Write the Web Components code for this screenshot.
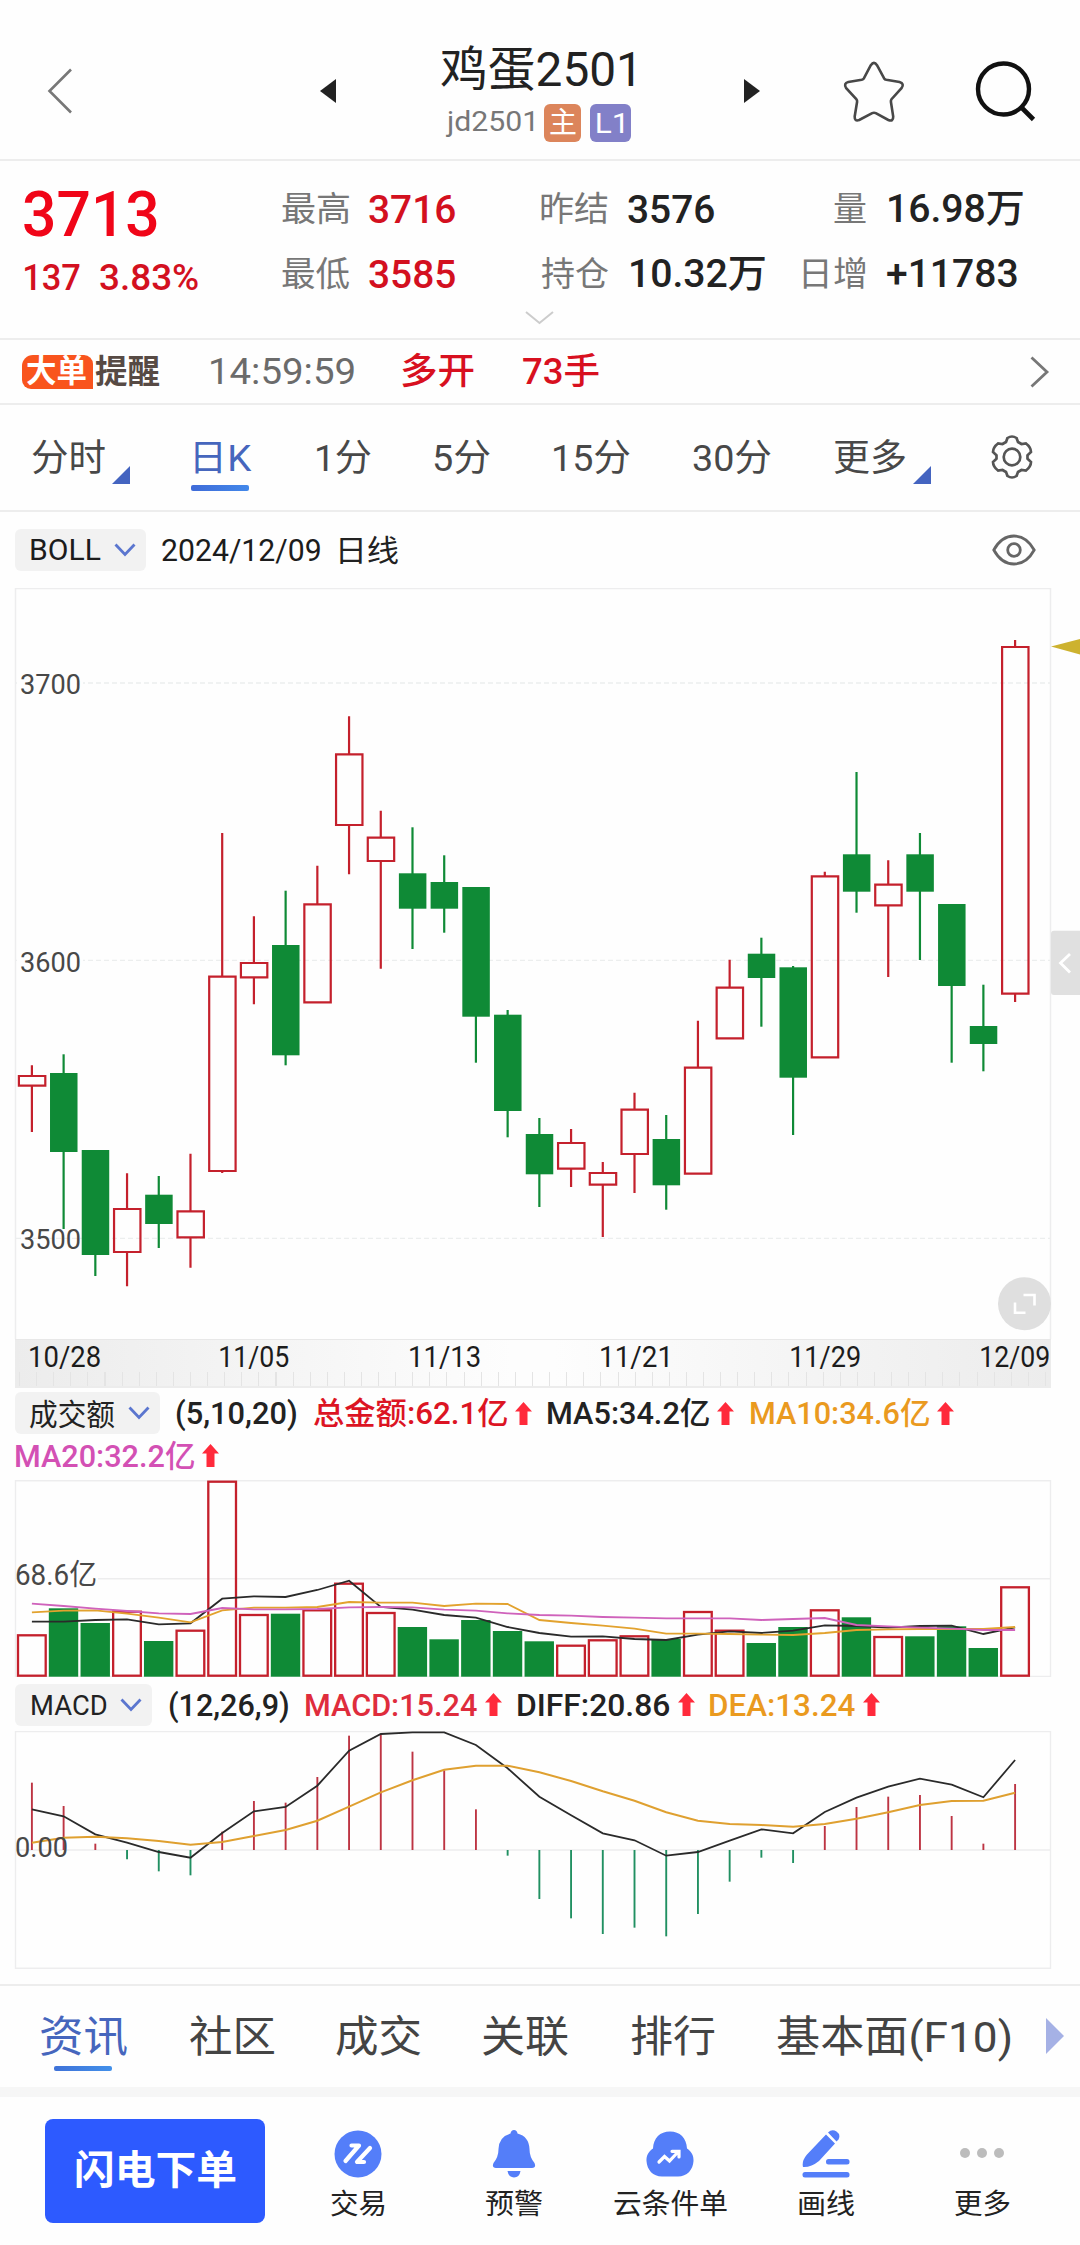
<!DOCTYPE html>
<html lang="zh-CN">
<head>
<meta charset="utf-8">
<title>鸡蛋2501</title>
<style>
html,body{margin:0;padding:0;background:#fefefe}
body{width:1080px;height:2245px;overflow:hidden;font-family:Roboto,"Noto Sans CJK SC",sans-serif;color:#222}
</style>
</head>
<body>
<quote-page></quote-page>
<script>
const FAMILY = 'Roboto,"Noto Sans CJK SC",sans-serif';
const ctx = document.createElement('canvas').getContext('2d');

function component(name, css, html) {
  const t = document.createElement('template');
  t.innerHTML = `<style>:host{display:block;box-sizing:border-box}*{box-sizing:border-box}svg{display:block;flex:none}${css}</style>${html}`;
  customElements.define(name, class extends HTMLElement {
    constructor() {
      super();
      this.attachShadow({ mode: 'open' }).appendChild(t.content.cloneNode(true));
    }
  });
}

/* Single line of text condensed or widened so its ink is exactly w pixels wide.
   w: ink width, g: gap before, s: font size, b: weight, c: colour */
customElements.define('fit-text', class extends HTMLElement {
  constructor() {
    super();
    this.attachShadow({ mode: 'open' }).innerHTML =
      `<style>:host{display:block;flex:none;white-space:nowrap}span{display:inline-block;transform-origin:0 50%}</style><span><slot></slot></span>`;
  }
  connectedCallback() {
    const a = n => this.getAttribute(n);
    const size = +(a('s') || 34), weight = a('b') || 400, w = +a('w');
    const st = this.style, inner = this.shadowRoot.querySelector('span');
    st.font = `${weight} ${size}px ${FAMILY}`;
    st.lineHeight = Math.round(size * 1.1) + 'px';
    st.height = st.lineHeight;
    st.width = w + 'px';
    if (a('g')) st.marginLeft = a('g') + 'px';
    if (a('c')) st.color = a('c');
    ctx.font = `${weight} ${size}px ${FAMILY}`;
    const m = ctx.measureText(this.textContent);
    const k = w / (m.actualBoundingBoxLeft + m.actualBoundingBoxRight);
    inner.style.transform = `translateX(${m.actualBoundingBoxLeft * k}px) scaleX(${k})`;
  }
});

component('rise-arrow', ':host{flex:none;width:17px;height:23px}',
  `<svg width="17" height="23"><path d="M8.5 0L17 9.5H12.5V23H4.5V9.5H0Z" fill="#ff2a3b"/></svg>`);

component('indicator-chip',
  ':host{flex:none;height:42px;display:flex;align-items:center;background:#f2f2f2;border-radius:6px}svg{margin-left:auto;margin-right:10px}',
  `<slot></slot><svg width="22" height="14"><path d="M1.5 1.5L11 11.5L20.5 1.5" fill="none" stroke="#5b76cf" stroke-width="2.8"/></svg>`);

component('page-header',
  `:host{height:161px;border-bottom:2px solid #ededed;display:flex;align-items:flex-start}
   .mid{display:flex;flex-direction:column;margin-left:105px;width:195px;padding-top:43px}
   .sub{display:flex;align-items:center;height:38px;margin-top:8px;padding-left:5px}
   .tag{height:38px;border-radius:6px;display:flex;align-items:center;color:#fff}`,
  `<svg width="26" height="46" style="margin:68px 0 0 47px"><path d="M24 1.5L2.5 23L24 44.5" fill="none" stroke="#777" stroke-width="2.6"/></svg>
   <svg width="16" height="24" style="margin:79px 0 0 247px"><path d="M16 0V24L0 12Z" fill="#222"/></svg>
   <div class="mid">
     <fit-text w="193" s="48" c="#222">鸡蛋2501</fit-text>
     <div class="sub">
       <fit-text w="87" s="28" c="#777" style="margin-top:-3px">jd2501</fit-text>
       <span class="tag" style="background:#dc855b;width:37px;margin-left:11px"><fit-text w="26" g="5.5" s="29">主</fit-text></span>
       <span class="tag" style="background:#8280c8;width:41px;margin-left:9px"><fit-text w="26" g="7" s="28">L1</fit-text></span>
     </div>
   </div>
   <svg width="16" height="24" style="margin:79px 0 0 108px"><path d="M0 0V24L16 12Z" fill="#222"/></svg>
   <svg width="62" height="62" style="margin:61px 0 0 83px" viewBox="0 0 62 62"><path d="M27.8 4.2Q31 -.5 34 4.2L41 17.2Q41.8 18.5 43.3 18.8L56.5 21Q61.8 22.5 58.5 27.2L48.5 38.2Q47.7 39.3 47.9 40.8L50.2 55.5Q50.4 60.9 45.3 59L32.8 52.2Q31 51.3 29.2 52.2L16.2 59Q11.4 60.7 11.7 55.5L14.1 40.8Q14.3 39.3 13.3 38.2L3.2 27.2Q.2 22.4 5.3 21L18.7 18.8Q20.2 18.4 21 17.2Z" fill="none" stroke="#484848" stroke-width="2.6"/></svg>
   <svg width="62" height="62" style="margin:60px 0 0 70px" viewBox="0 0 62 62"><circle cx="28.5" cy="29" r="25.5" fill="none" stroke="#111" stroke-width="4.4"/><path d="M46 47L58.5 59.5" stroke="#111" stroke-width="4.6"/></svg>`);

component('quote-board',
  `:host{height:179px;border-bottom:2px solid #ededed;display:grid;grid-template-rows:96px 34px 47px;}
   .r{display:flex;align-items:center}
   .r1{padding:0 0 0 24px}
   .r2{padding-left:25px}
   .r3{align-items:flex-start;padding-top:20px}`,
  `<div class="r r1"><fit-text w="133" s="63" b="500" c="#f00518" style="margin-top:10px">3713</fit-text>
     <fit-text w="67" g="125" s="34" c="#777">最高</fit-text><fit-text w="86" g="20" s="39.5" b="500" c="#d3101f">3716</fit-text>
     <fit-text w="67" g="86" s="34" c="#777">昨结</fit-text><fit-text w="86" g="20" s="39.5" b="500">3576</fit-text>
     <fit-text w="32" g="120" s="34" c="#777">量</fit-text><fit-text w="134" g="23" s="39" b="500">16.98万</fit-text></div>
   <div class="r r2"><fit-text w="55" s="37" b="500" c="#d3101f" style="margin-top:6px">137</fit-text><fit-text w="98" g="20" s="37" b="500" c="#d3101f" style="margin-top:6px">3.83%</fit-text>
     <fit-text w="67" g="84" s="34" c="#777">最低</fit-text><fit-text w="86" g="20" s="39.5" b="500" c="#d3101f">3585</fit-text>
     <fit-text w="67" g="86" s="34" c="#777">持仓</fit-text><fit-text w="134" g="23" s="39" b="500">10.32万</fit-text>
     <fit-text w="62" g="38" s="34" c="#777">日增</fit-text><fit-text w="130" g="22" s="38" b="500">+11783</fit-text></div>
   <div class="r r3"><svg width="29" height="14" style="margin-left:525px"><path d="M1 1L14.5 12L28 1" fill="none" stroke="#ccc" stroke-width="2"/></svg></div>`);

component('order-alert',
  `:host{height:65px;border-bottom:2px solid #ededed;display:flex;align-items:center}
   .b{background:#f9541d;height:34px;width:71px;margin-left:22px;border-radius:11px 9px 0 9px;display:flex;align-items:center}`,
  `<span class="b"><fit-text w="59" g="5" s="32" b="700" c="#fff" style="font-style:italic">大单</fit-text></span>
   <fit-text w="65" g="2" s="33" b="600" c="#574a44">提醒</fit-text>
   <fit-text w="143" g="51" s="37.5" c="#6b6b6b">14:59:59</fit-text>
   <fit-text w="72" g="48" s="36" b="500" c="#d8101f">多开</fit-text>
   <fit-text w="76" g="49" s="36" b="500" c="#d8101f">73手</fit-text>
   <svg width="20" height="32" style="margin-left:431px"><path d="M1.5 1.5L17 16L1.5 30.5" fill="none" stroke="#777" stroke-width="2.8"/></svg>`);

component('period-tabs',
  `:host{height:107px;border-bottom:2px solid #ededed;display:flex;align-items:center;color:#484848;padding-top:2px}
   .on{display:flex;flex-direction:column;margin-left:61px;width:62px;padding-top:12px}
   i{display:block;width:58px;height:6px;border-radius:2px;background:linear-gradient(90deg,#3f6bd8,#4288ea);margin-top:6px}`,
  `<fit-text w="73" g="32" s="37">分时</fit-text>
   <svg width="18" height="18" style="margin:32px 0 0 7px"><path d="M18 0V18H0Z" fill="#4464c0"/></svg>
   <span class="on"><fit-text w="57" g="4" s="37" c="#4666bd">日K</fit-text><i></i></span>
   <fit-text w="54" g="64" s="37">1分</fit-text>
   <fit-text w="56" g="63" s="37">5分</fit-text>
   <fit-text w="76" g="64" s="37">15分</fit-text>
   <fit-text w="78" g="63" s="37">30分</fit-text>
   <fit-text w="71" g="63" s="37">更多</fit-text>
   <svg width="18" height="18" style="margin:32px 0 0 8px"><path d="M18 0V18H0Z" fill="#4464c0"/></svg>
   <svg width="44" height="44" style="margin:-3px 0 0 59px" viewBox="0 0 44 44" fill="none" stroke="#555" stroke-width="2.7"><path d="M17.5 3Q22 0 26.500 3L28 7L31.500 9L36 8.500Q40.800 12 41 17L37.500 20.300V23.700L41 27Q40.800 32 36 35.500L31.500 35L28 37L26.500 41Q22 44 17.500 41L16 37L12.500 35L8 35.500Q3.200 32 3 27L6.500 23.700V20.300L3 17Q3.200 12 8 8.500L12.500 9L16 7Z"/><circle cx="22" cy="22" r="8.300"/></svg>`);

component('kline-caption',
  `:host{height:76px;display:flex;align-items:center;padding:0 44px 0 15px}`,
  `<indicator-chip style="width:131px"><fit-text w="70" g="16" s="29.500" c="#1c1c1c">BOLL</fit-text></indicator-chip>
   <fit-text w="158" g="16" s="31.500" c="#1c1c1c">2024/12/09</fit-text><fit-text w="58" g="20" s="30">日线</fit-text>
   <svg width="44" height="32" style="margin-left:auto" viewBox="0 0 44 32" fill="none" stroke="#666" stroke-width="2.800"><path d="M1.800 16C7 6.500 14 2 22 2S37 6.500 42.200 16C37 25.500 30 30 22 30S7 25.500 1.800 16Z"/><circle cx="22" cy="16" r="6.300"/></svg>`);

const RED = '#c4202c', GREEN = '#0f8a36', FRAME = '#ededee';
const X = i => 31.9 + i * 31.716;
const svgText = (x, base, w, size, s, fill = '#484848') =>
  `<text x="${x}" y="${base}" textLength="${w}" lengthAdjust="spacingAndGlyphs" font-size="${size}" fill="${fill}">${s}</text>`;

/* rising flag, high, body top, body bottom, low */
const candles = [
[1,1065.3,1076,1085.7,1132],[0,1054.3,1073,1152,1229],[0,1150,1150,1255,1276],[1,1173.3,1209,1252,1286.3],
[0,1176,1194.7,1224,1248],[1,1153.7,1211.3,1237.3,1267.7],[1,833,976.7,1171,1173],[1,916.3,963,977.3,1004.3],
[0,890.7,945,1055.3,1065.3],[1,865.7,904.3,1002.3,1002.3],[1,716.3,754.3,825,874.3],[1,810.7,837.7,861,968.7],
[0,827.3,873.3,908.7,949],[0,855.3,882,908.7,932.7],[0,887,887,1016.7,1062.7],[0,1010,1014.7,1111,1137.3],
[0,1118,1134,1174.3,1207],[1,1129,1143,1168.7,1187],[1,1162,1173,1184.7,1237],[1,1092.7,1109.7,1154,1193],
[0,1115,1139,1185.3,1209.7],[1,1020.7,1067.7,1173.7,1173.7],[1,959.7,987.7,1038.3,1038.3],[0,937.7,953.7,978,1026.7],
[0,966,967.3,1077.7,1135],[1,871.7,876.3,1057.3,1057.3],[0,772,854.3,891.7,912.7],[1,860.3,884.7,905.3,977],
[0,833,854.3,891.7,960],[0,904,904,986,1062.7],[0,984.7,1026,1044,1071.3],[1,640,647,993.7,1002]];

const candleMarks = candles.map(([r, h, t, b, l], i) => {
  const x = X(i);
  return r
    ? `<path d="M${x} ${h}V${t}M${x} ${b}V${l}M${x-13} ${t}H${x+13.4}V${b}H${x-13}Z" fill="none" stroke="${RED}" stroke-width="2.2"/>`
    : `<path d="M${x} ${h}V${l}" stroke="${GREEN}" stroke-width="2.2"/><rect x="${x-13.6}" y="${t}" width="27.500" height="${b-t}" fill="${GREEN}"/>`;
}).join('');

component('kline-chart', ':host{height:751px}',
  `<svg width="1080" height="751" viewBox="0 588 1080 751" font-family='${FAMILY}'>
   <path d="M15.500 1339V588.500H1050.500V1339" fill="none" stroke="${FRAME}" stroke-width="1.500"/>
   <path d="M16 683H1050M16 960.300H1050M16 1238.300H1050" stroke="#eceeee" stroke-width="1.300" stroke-dasharray="5 3"/>
   <path d="M17 668h66v30h-66zM17 946h66v30h-66z" fill="#fefefe"/>
   ${candleMarks}
   ${svgText(20,694,61,28,'3700')}${svgText(20,971.500,61,28,'3600')}${svgText(20,1249.300,61,28,'3500')}
   <path d="M1051 646.500L1080 639V654.500Z" fill="#cdb22f"/>
   <path d="M1080 930.700H1054Q1051 930.700 1051 934V992Q1051 995 1054 995H1080Z" fill="#e0e0e0"/>
   <path d="M1070 954L1060.500 963L1070 972.500" fill="none" stroke="#fff" stroke-width="2.800"/>
   <circle cx="1024.500" cy="1303.700" r="26.500" fill="#dfdfdf"/>
   <path d="M1023.500 1295H1034.500V1305.500M1015 1302.500V1312.800H1025.500" fill="none" stroke="#fff" stroke-width="2.600"/>
   </svg>`);

component('date-axis',
  `:host{height:49px;margin:0 29px 0 15px;display:flex;align-items:flex-start;padding-top:1px;border-top:1px solid #e8e8e8;border-bottom:2px solid #ececec;
   background:repeating-linear-gradient(90deg,transparent 0 4px,#e4e4e4 4px 5px,transparent 5px 17.100px) 0 32px/100% 15px no-repeat,linear-gradient(90deg,#ececec,#fdfdfd 48%,#fdfdfd 52%,#ececec);color:#1c1c1c}`,
  `<fit-text w="70" g="15" s="29">10/28</fit-text><fit-text w="69" g="120" s="29">11/05</fit-text>
   <fit-text w="70" g="121" s="29">11/13</fit-text><fit-text w="67" g="121" s="29">11/21</fit-text>
   <fit-text w="69" g="123" s="29">11/29</fit-text><fit-text w="68" g="121" s="29">12/09</fit-text>`);

component('volume-caption',
  `:host{height:92px;padding:4px 0 0 15px}
   div{display:flex;align-items:center;height:42px}
   div+div{height:43px;padding-left:1px}rise-arrow{margin-left:8px}
   fit-text{position:relative;top:1px}`,
  `<div><indicator-chip style="width:145px"><fit-text w="85" g="15" s="30">成交额</fit-text></indicator-chip>
   <fit-text w="120" g="16" s="30.500" b="500">(5,10,20)</fit-text>
   <fit-text w="193" g="18" s="30.500" b="500" c="#dc1423">总金额:62.1亿</fit-text><rise-arrow></rise-arrow>
   <fit-text w="161" g="16" s="30.500" b="500">MA5:34.2亿</fit-text><rise-arrow></rise-arrow>
   <fit-text w="178" g="17" s="30.500" b="500" c="#ea9a1f">MA10:34.6亿</fit-text><rise-arrow></rise-arrow></div>
   <div><fit-text w="178" g="0" s="30.500" b="500" c="#d350b4">MA20:32.2亿</fit-text><rise-arrow></rise-arrow></div>`);

const polyline = (ys, y0, color, sw = 1.8) =>
  `<polyline points="${ys.map((v, i) => X(i).toFixed(1) + ',' + (y0 + v / 3).toFixed(1)).join(' ')}" fill="none" stroke="${color}" stroke-width="${sw}"/>`;

const rising = candles.map(c => c[0]);
const volTop = [1635.3,1608.3,1623,1611.7,1641,1630.7,1481.7,1615,1613.7,1610.3,1583.7,1613,1627,1639.3,1620,1631,1641.3,1645.7,1640.3,1636.3,1639,1612,1630.7,1643,1627,1610.3,1617.3,1637,1636.3,1626.3,1648,1587.3];
const volBars = volTop.map((t, i) => rising[i]
  ? `<rect x="${X(i)-13.9}" y="${t}" width="27.700" height="${1675.7-t}" fill="none" stroke="${RED}" stroke-width="2.300"/>`
  : `<rect x="${X(i)-14.800}" y="${t}" width="29.400" height="${1676.7-t}" fill="${GREEN}"/>`).join('');
const ma5 = [695,695,690,688,703,700,626,619,621,600,572,651,659,675,683,711,729,740,739,747,750,734,724,729,722,706,708,713,708,707,732,712];
const ma10 = [667,662,661,671,683,697,661,653,653,651,636,638,638,648,641,642,690,699,707,716,731,731,732,734,735,729,720,718,717,717,717,711];
const ma20 = [641,648,656,663,670,672,654,658,658,657,652,651,652,659,662,670,675,677,681,683,685,685,685,690,687,684,705,709,713,716,720,720];

component('volume-chart', ':host{height:197px}',
  `<svg width="1080" height="197" viewBox="0 1480 1080 197" font-family='${FAMILY}'>
   <path d="M15.500 1676.500V1480.700H1050.500V1676.500ZM15.500 1578.700H1050.500" fill="none" stroke="${FRAME}" stroke-width="1.400"/>
   <path d="M17 1562h81v28h-81z" fill="#fefefe"/>
   ${volBars}${polyline(ma5,1390,'#2a2a2a')}${polyline(ma10,1390,'#e2a22e')}${polyline(ma20,1390,'#cf62bb')}
   ${svgText(15,1585,82,29,'68.6亿')}</svg>`);

component('macd-caption',
  `:host{height:54px;display:flex;align-items:center;padding:1px 0 0 15px}rise-arrow{margin-left:8px;margin-top:-1px}
   fit-text{position:relative;top:1px}`,
  `<indicator-chip style="width:137px;"><fit-text w="75" g="17" s="28.500" b="400">MACD</fit-text></indicator-chip>
   <fit-text w="119" g="17" s="30.500" b="500">(12,26,9)</fit-text>
   <fit-text w="171" g="18" s="30.500" b="500" c="#df2c3c">MACD:15.24</fit-text><rise-arrow></rise-arrow>
   <fit-text w="152" g="16" s="30.500" b="500">DIFF:20.86</fit-text><rise-arrow></rise-arrow>
   <fit-text w="145" g="15" s="30.500" b="500" c="#ea9a1f">DEA:13.24</fit-text><rise-arrow></rise-arrow>`);

const hist = [308,378,491,538,574,586,455,363,368,291,167,162,215,271,388,527,657,715,762,743,769,702,605,533,549,438,381,350,345,408,491,312];
const diff = [388,409,463,488,516,533,459,394,381,317,212,162,157,157,195,265,350,406,460,481,527,516,482,448,460,396,353,320,296,314,352,240];
const dea = [488,473,470,475,483,494,486,468,450,422,380,337,301,269,257,257,277,303,334,362,397,422,432,435,440,432,416,397,375,363,362,338];
component('macd-chart', ':host{height:253px}',
  `<svg width="1080" height="253" viewBox="0 1731 1080 253" font-family='${FAMILY}'>
   <path d="M15.500 1968.300V1731.500H1050.500V1968.300ZM15.500 1850H1050.500" fill="none" stroke="${FRAME}" stroke-width="1.400"/>
   ${hist.map((v, i) => `<path d="M${X(i)} 1850V${1680+v/3}" stroke="${v<510?'#bd3443':'#219062'}" stroke-width="1.900"/>`).join('')}
   ${polyline(diff,1680,'#2a2a2a')}${polyline(dea,1680,'#dfa030',2)}
   ${svgText(15,1856.500,53,28,'0.00')}</svg>`);

component('info-tabs',
  `:host{height:103px;border-top:2px solid #ededed;display:flex;align-items:center;color:#444;padding-top:2px}
   .on{display:flex;flex-direction:column;margin-left:41px;width:86px;padding-top:10px}
   i{display:block;width:58px;height:5px;border-radius:2px;background:linear-gradient(90deg,#3f72d8,#4290ea);margin:5px 0 0 13px}`,
  `<span class="on"><fit-text w="86" s="43" c="#4666bd">资讯</fit-text><i></i></span>
   <fit-text w="84" g="62.500" s="43">社区</fit-text><fit-text w="85" g="62" s="43">成交</fit-text>
   <fit-text w="85" g="62" s="43">关联</fit-text><fit-text w="84" g="63" s="43">排行</fit-text>
   <fit-text w="233" g="62" s="43">基本面(F10)</fit-text>
   <svg width="18" height="36" style="margin:-3px 0 0 36px"><path d="M0 0L18 18L0 36Z" fill="#a5b1e5"/></svg>`);

component('tool-item',
  ':host{width:156px;display:flex;flex-direction:column;align-items:center;padding-top:33px}::slotted(svg){display:block;margin-bottom:11px}',
  `<slot></slot>`);

component('trade-bar',
  `:host{height:158px;border-top:10px solid #f6f6f6;display:flex;align-items:flex-start;color:#222}
   button{border:0;padding:0;width:220px;height:104px;margin:22px 15px 0 45px;border-radius:8px;background:#2d5aff;display:flex;align-items:center}`,
  `<button><fit-text w="160" g="31" s="40" b="700" c="#fff">闪电下单</fit-text></button>
   <tool-item><svg width="48" height="48" viewBox="0 0 48 48"><circle cx="24" cy="24" r="23.500" fill="#547ef9"/><path d="M17.500 15.500H25L11.500 31M36 18L23 32H30" fill="none" stroke="#fff" stroke-width="4.200" stroke-linejoin="round" stroke-linecap="round"/></svg><fit-text w="54" s="28">交易</fit-text></tool-item>
   <tool-item><svg width="48" height="48" viewBox="0 0 48 48" fill="#547ef9"><path d="M24 0Q27 0 27.500 3.500Q39 6.500 39.500 19Q39.500 27 44.500 33Q46.500 38 42 38H6Q1.500 38 3.500 33Q8.500 27 8.500 19Q9 6.500 20.500 3.500Q21 0 24 0ZM17.500 41H30.500Q29.500 47.500 24 47.500T17.500 41Z"/></svg><fit-text w="56" s="28">预警</fit-text></tool-item>
   <tool-item><svg width="48" height="48" viewBox="0 0 48 48"><path d="M24 1.500C34 1.500 40.500 8 41 18.500C46 22 47.800 26 47.500 31C47 40 41 46.500 32 46.500H16C7 46.500 1 40 .500 31C.200 26 2 22 7 18.500C7.500 8 14 1.500 24 1.500Z" fill="#547ef9"/><path d="M13 32L18.500 26.500L23.500 31L31.500 22.500M26 21.300H33V27" fill="none" stroke="#fff" stroke-width="3.200" stroke-linecap="round"/></svg><fit-text w="113" s="28">云条件单</fit-text></tool-item>
   <tool-item><svg width="48" height="48" viewBox="0 0 48 48" fill="#547ef9"><path d="M24 4.500L33 13.500L17 31Q9 37.500 1 37Q-.500 31 5 24.500ZM26 2.500Q30 -1.500 34.500 1.500T36.500 9.500L34.500 11.500Z"/><rect x="24" y="29" width="23.500" height="5.500" rx="2.500"/><rect x=".500" y="42" width="47" height="5.500" rx="2.500"/></svg><fit-text w="55" s="28">画线</fit-text></tool-item>
   <tool-item><svg width="48" height="48" viewBox="0 0 48 48" fill="#bcbcbc"><circle cx="7" cy="23" r="5"/><circle cx="24" cy="23" r="5"/><circle cx="41" cy="23" r="5"/></svg><fit-text w="55" s="28">更多</fit-text></tool-item>`);

component('quote-page', ':host{width:1080px;display:flex;flex-direction:column}',
  `<page-header></page-header><quote-board></quote-board><order-alert></order-alert><period-tabs></period-tabs>
   <kline-caption></kline-caption><kline-chart></kline-chart><date-axis></date-axis>
   <volume-caption></volume-caption><volume-chart></volume-chart><macd-caption></macd-caption><macd-chart></macd-chart>
   <info-tabs></info-tabs><trade-bar></trade-bar>`);
</script>
</body>
</html>
